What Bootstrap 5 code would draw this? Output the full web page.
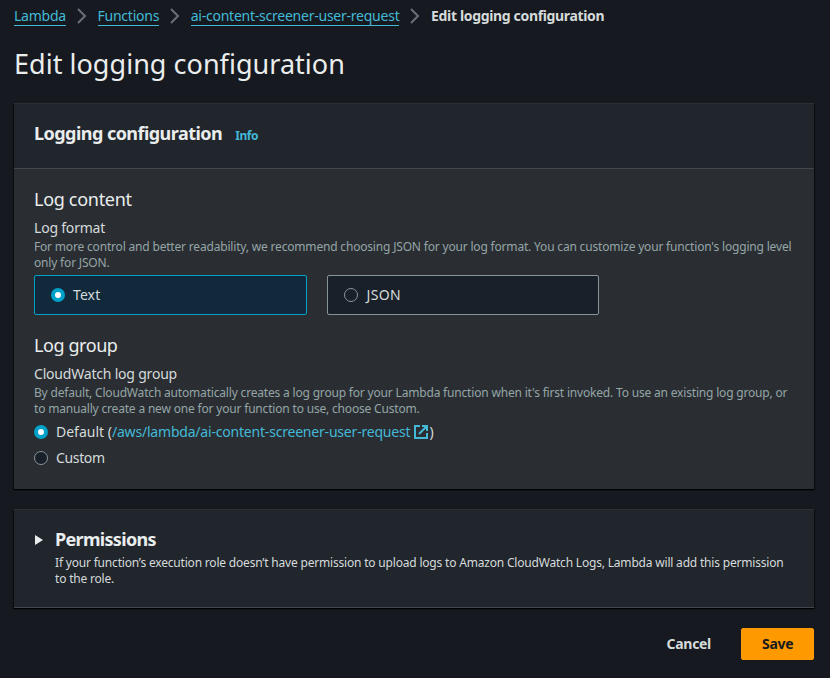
<!DOCTYPE html>
<html lang="en" data-bs-theme="dark">
<head>
<meta charset="utf-8">
<meta name="viewport" content="width=device-width, initial-scale=1">
<title>Edit logging configuration</title>
<link href="https://cdn.jsdelivr.net/npm/bootstrap@5.3.0/dist/css/bootstrap.min.css" rel="stylesheet">
<script src="https://cdn.jsdelivr.net/npm/bootstrap@5.3.0/dist/js/bootstrap.bundle.min.js" defer></script>
<style>
body{background:#16191f;color:#d5dbdb;font:14px/22px "Noto Sans",sans-serif;letter-spacing:-.2px;min-height:678px}
.page{padding:5px 16px 0 14px}
a,.info-link{color:#44b9d6;text-decoration:none}
.breadcrumb{--bs-breadcrumb-divider:"";--bs-breadcrumb-item-padding-x:0;line-height:22px}
.crumb-link{display:block;line-height:20px;height:20px;margin-top:1px;border-bottom:1px solid #44b9d6;letter-spacing:-.24px}
.chev{width:10px;height:16px;margin:3px 10.8px 0 10.8px;fill:none;stroke:#687078;stroke-width:2}
.crumb-current{font-weight:700;letter-spacing:-.34px}
h1{font-size:27px;line-height:36px;font-weight:400;letter-spacing:.03px;color:#eaeded;margin:19px 0 21px}
.panel{background:#2a2e33;box-shadow:0 1px 1px #000c,1px 1px 1px #0006,-1px 1px 1px #0006;border-top:1px solid #2b2f33}
.panel-head{background:#21252c;height:65px;padding:18px 20px 0;border-bottom:1px solid #414750}
h2{font-size:18px;line-height:22px;font-weight:700;color:#eaeded;letter-spacing:-.54px;margin:0}
.info-link{font-size:12px;font-weight:700;letter-spacing:-.4px;margin:3px 0 0 13px}
.panel-body{padding:19px 20px 0;height:320px}
h3{font-size:18px;line-height:22px;color:#eaeded;letter-spacing:-.3px;margin:0;font-weight:400}
.field-name{margin-top:7px;line-height:22px}
.hint{font-size:12px;line-height:16px;color:#95a5a6;letter-spacing:-.182px;white-space:nowrap}
.tiles{gap:20px;margin-top:4px}
.tile{width:272.5px;height:40px;border:1px solid #879596;border-radius:2px;background:#1a2029;padding:0 16px}
.tile-on{border-color:#00a1c9;background:#12293b}
.t-text{letter-spacing:.1px}
.t-json{letter-spacing:.35px;margin-left:1px}
.dot{width:14px;height:14px;border:1px solid #879596;border-radius:50%;background:#1a2029;flex:none;margin-right:8px}
.dot-on{border:4px solid #00a1c9;background:#fff}
.log-group{margin-top:19px;letter-spacing:-.42px}
.choice{height:22px}
.def-label{letter-spacing:0}
.log-link{letter-spacing:-.2px}
.c-custom{letter-spacing:-.35px}
.ext{width:14px;height:14px;margin:0 1px 0 4px;fill:none;stroke:#44b9d6;stroke-width:2}
.perm{background:#21252c;height:99px;margin-top:20px;padding:18px 20px 0;border-bottom:1px solid #414750}
.perm-title{letter-spacing:-.68px}
.perm-hint{color:#d5dbdb;margin-top:5px;letter-spacing:-.19px}
.caret{width:9px;height:10px;margin:7px 12px 0 0;fill:#eaeded;flex:none}
.actions{margin-top:20px;gap:9px}
.btn{--bs-btn-font-size:14px;--bs-btn-font-weight:700;--bs-btn-line-height:22px;--bs-btn-padding-y:4px;--bs-btn-padding-x:20px;--bs-btn-border-radius:2px}
.btn-quiet{--bs-btn-color:#d5dbdb;letter-spacing:-.3px}
.btn-main{--bs-btn-color:#16191f;--bs-btn-bg:#f90;--bs-btn-border-color:#f90;width:73px;letter-spacing:-.3px}
</style>
</head>
<body>
<main class="page">
<nav aria-label="breadcrumb">
<ol class="breadcrumb mb-0 flex-nowrap">
<li class="breadcrumb-item d-flex"><a class="crumb-link" href="#">Lambda</a><svg class="chev" viewBox="0 0 10 16"><path d="M1 1l7 7-7 7"/></svg></li>
<li class="breadcrumb-item d-flex"><a class="crumb-link" href="#">Functions</a><svg class="chev" viewBox="0 0 10 16"><path d="M1 1l7 7-7 7"/></svg></li>
<li class="breadcrumb-item d-flex"><a class="crumb-link" href="#">ai-content-screener-user-request</a><svg class="chev" viewBox="0 0 10 16"><path d="M1 1l7 7-7 7"/></svg></li>
<li class="breadcrumb-item crumb-current">Edit logging configuration</li>
</ol>
</nav>
<h1>Edit logging configuration</h1>
<section class="panel">
<div class="panel-head d-flex align-items-start"><h2>Logging configuration</h2><a class="info-link" href="#">Info</a></div>
<div class="panel-body">
<h3>Log content</h3>
<div class="field-name">Log format</div>
<div class="hint">For more control and better readability, we recommend choosing JSON for your log format. You can customize your function's logging level<br>only for JSON.</div>
<div class="tiles d-flex">
<label class="tile tile-on d-flex align-items-center"><i class="dot dot-on"></i><span class="t-text">Text</span></label>
<label class="tile d-flex align-items-center"><i class="dot"></i><span class="t-json">JSON</span></label>
</div>
<h3 class="log-group">Log group</h3>
<div class="field-name">CloudWatch log group</div>
<div class="hint">By default, CloudWatch automatically creates a log group for your Lambda function when it's first invoked. To use an existing log group, or<br>to manually create a new one for your function to use, choose Custom.</div>
<label class="choice d-flex align-items-center mt-1"><i class="dot dot-on"></i><span class="def-label">Default (</span><a class="log-link" href="#">/aws/lambda/ai-content-screener-user-request</a><svg class="ext" viewBox="0 0 14 14"><path d="M6 1H1v12h12V8M8 1h5v5M13 1L5 9"/></svg><span>)</span></label>
<label class="choice d-flex align-items-center mt-1"><i class="dot"></i><span class="c-custom">Custom</span></label>
</div>
</section>
<section class="panel perm d-flex">
<svg class="caret" viewBox="0 0 9 10"><path d="M1 0l8 5-8 5z"/></svg>
<div><h2 class="perm-title">Permissions</h2><div class="hint perm-hint">If your function’s execution role doesn’t have permission to upload logs to Amazon CloudWatch Logs, Lambda will add this permission<br>to the role.</div></div>
</section>
<div class="actions d-flex justify-content-end"><button class="btn btn-quiet" type="button">Cancel</button><button class="btn btn-main" type="button">Save</button></div>
</main>
</body>
</html>
